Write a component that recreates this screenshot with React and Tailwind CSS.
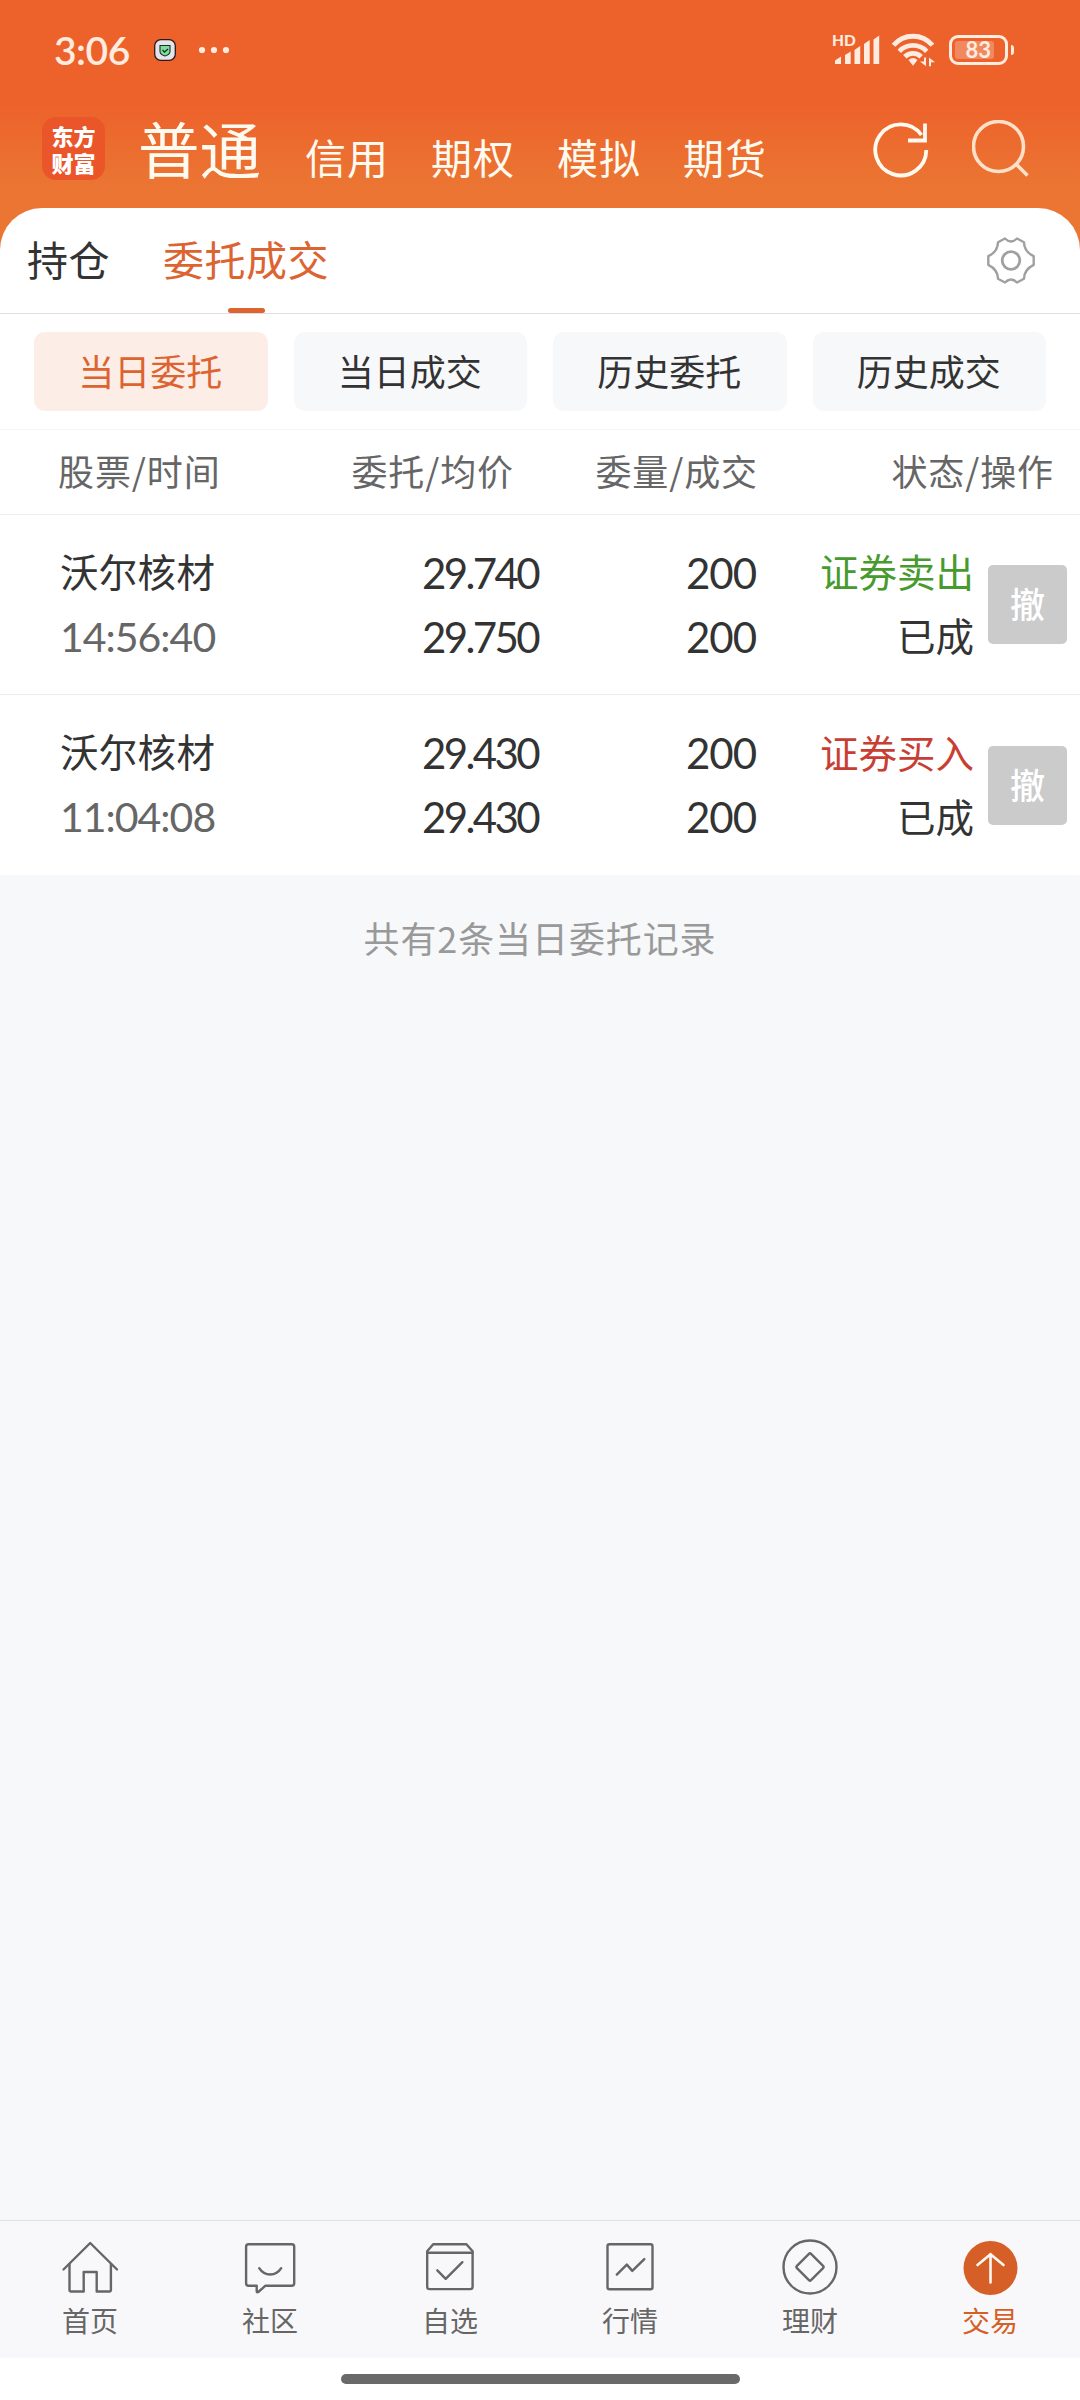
import React from 'react';

const accounts = ['信用', '期权', '模拟', '期货'];

const filters = ['当日委托', '当日成交', '历史委托', '历史成交'];

const orders = [
  {
    name: '沃尔核材',
    time: '14:56:40',
    price: '29.740',
    avg: '29.750',
    amount: '200',
    filled: '200',
    side: '证券卖出',
    sideColor: 'text-[#479a2d]',
    status: '已成',
  },
  {
    name: '沃尔核材',
    time: '11:04:08',
    price: '29.430',
    avg: '29.430',
    amount: '200',
    filled: '200',
    side: '证券买入',
    sideColor: 'text-[#c93e33]',
    status: '已成',
  },
];

const NavIcon = ({ children }) => (
  <svg
    width="60"
    height="60"
    viewBox="0 0 60 60"
    fill="none"
    stroke="#666666"
    strokeWidth="2.4"
    strokeLinecap="round"
    strokeLinejoin="round"
  >
    {children}
  </svg>
);

const tabs = [
  {
    label: '首页',
    icon: (
      <NavIcon>
        <path d="M3.5 32.5 30.2 6 57 32.500" />
        <path d="M9.500 27v26.300q0 1.200 1.200 1.200h13V35h13v19.500h13q1.200 0 1.200-1.200V27" />
      </NavIcon>
    ),
  },
  {
    label: '社区',
    icon: (
      <NavIcon>
        <path d="M8.500 7.300h43.300q2.400 0 2.400 2.400v36.600q0 2.400-2.400 2.400H25.500L18.300 55q-1.600.8-1.600-.8v-5.500H8.500q-2.400 0-2.400-2.400V9.700q0-2.400 2.400-2.400Z" />
        <path d="M19.200 31.200q4 6.300 11 6.300t11-6.300" />
      </NavIcon>
    ),
  },
  {
    label: '自选',
    icon: (
      <NavIcon>
        <path d="M7.200 15.700h45.400v34q0 2.400-2.400 2.400H9.600q-2.400 0-2.400-2.400Z" />
        <path d="M7.200 15.700v-1.500l6-7h33.200l6.200 7v1.500" />
        <path d="m17.300 33.300 8.400 8.500 16.700-16.600" />
      </NavIcon>
    ),
  },
  {
    label: '行情',
    icon: (
      <NavIcon>
        <rect x="7.500" y="7.300" width="45" height="45" rx="2" />
        <path d="m16.800 37.600 10-10 5.500 6.300 12-11.800" />
      </NavIcon>
    ),
  },
  {
    label: '理财',
    icon: (
      <NavIcon>
        <circle cx="30" cy="30" r="26.500" />
        <rect x="20" y="20" width="20" height="20" rx="1.500" transform="rotate(45 30 30)" />
      </NavIcon>
    ),
  },
  {
    label: '交易',
    active: true,
    icon: (
      <svg width="60" height="60" viewBox="0 0 60 60" fill="none" stroke="#fff8f0" strokeWidth="2.6" strokeLinecap="round" strokeLinejoin="round">
        <circle cx="30.500" cy="31" r="27" fill="#d65f28" stroke="none" />
        <path d="M30.500 45.500V17M17.500 28l13-10.800L43.500 28" />
      </svg>
    ),
  },
];

const StatusBar = () => (
  <div className="flex h-[100px] items-center justify-between pl-[54px] pr-[66px] text-[#ffebdf]">
    <div className="flex items-center">
      <span className="w-[100px] font-['Lato'] text-[39px] font-semibold leading-none tracking-[-0.5px]">3:06</span>
      <svg width="22" height="22" viewBox="0 0 22 22">
        <rect x="0.700" y="0.700" width="20.600" height="20.600" rx="6" fill="#e4e4ea" stroke="#2a1a1a" strokeWidth="1.300" />
        <path d="M6 6.500h10v6q0 3-5 4.500-5-1.500-5-4.500Z" fill="#7fdc9c" stroke="#123524" strokeWidth="1.100" />
        <path d="m8.500 11 2 2 3.500-3" fill="none" stroke="#123524" strokeWidth="1.300" />
      </svg>
      <svg className="ml-[22px]" width="32" height="8" viewBox="0 0 32 8" fill="currentColor">
        <circle cx="4" cy="4" r="3.100" />
        <circle cx="16" cy="4" r="3.100" />
        <circle cx="28" cy="4" r="3.100" />
      </svg>
    </div>
    <div className="flex items-center">
      <div className="relative h-[32px] w-[48px]">
        <span className="absolute left-[-1px] top-[-1px] font-['Lato'] text-[15.5px] font-black leading-[15px]">HD</span>
        <svg className="absolute left-0 top-0" width="48" height="32" viewBox="0 0 48 32" fill="currentColor">
          <path d="M2 26.500l6-4V30H2zM12 21l5.700-3.500V30H12zM21.500 16l5.700-4v18h-5.700zM31 10l5.700-4v24H31zM40.500 5.500l5.700-4V30h-5.700z" />
        </svg>
      </div>
      <svg className="ml-[10px]" width="46" height="36" viewBox="0 0 46 36" fill="none" stroke="currentColor" strokeWidth="4.8">
        <path d="M2.500 13.300a25.500 25.500 0 0 1 39 0" />
        <path d="M8.300 19.300a19 19 0 0 1 27.400 0" />
        <path d="M13.800 24.800a11.500 11.500 0 0 1 16.400 0" />
        <path d="M17.500 28q4.500-4 9 0L22 33.800Z" fill="currentColor" stroke="none" />
        <path d="M35 25.500v8.700l-6-4.700h4v-4zM38 34.200v-8.700l6 4.700h-4v4z" fill="currentColor" stroke="none" />
      </svg>
      <div className="ml-[12px] flex h-[30px] w-[59px] items-center rounded-[9px] border-3 border-current pl-[3px]">
        <div className="flex h-[18px] w-[39px] items-center justify-end rounded-[3px] bg-white/25 pr-[3px]">
          <span className="font-['Lato'] text-[22px] font-bold leading-none">83</span>
        </div>
      </div>
      <div className="ml-[3px] h-[10px] w-[3px] rounded-r-sm bg-current"></div>
    </div>
  </div>
);

const TopBar = () => (
  <div className="flex h-[108px] items-start pl-[42px] pr-[50px] pt-[17px] text-[#fffaf0]">
    <div className="flex h-[63px] w-[63px] flex-col items-center justify-center rounded-[14px] bg-[#ea5529] text-[22px] font-black text-white">
      <span className="h-[27px] leading-[26px]">东方</span>
      <span className="h-[27px] leading-[26px]">财富</span>
    </div>
    <span className="ml-[33px] w-[167px] text-[61.5px] leading-[61px]">普通</span>
    <div className="flex gap-[42px] pt-[18px]">
      {accounts.map((item) => (
        <span key={item} className="w-[84px] whitespace-nowrap text-[41px] leading-[42px] tracking-[1px]">{item}</span>
      ))}
    </div>
    <div className="ml-auto flex gap-[42px]">
      <svg className="mt-[3px]" width="58" height="60" viewBox="0 0 58 60" fill="none" stroke="currentColor" strokeWidth="3.8">
        <path d="M54.300 30A25.500 25.500 0 1 1 49.500 15" />
        <path d="M53 3.500V20.500H36" />
      </svg>
      <svg className="mt-[3px] text-[#ffe0c8]" width="58" height="60" viewBox="0 0 58 60" fill="none" stroke="currentColor" strokeWidth="3.6">
        <circle cx="26.500" cy="26.500" r="25" />
        <path d="m43.500 43.500 12 12" />
      </svg>
    </div>
  </div>
);

const SettingsIcon = () => (
  <svg width="52" height="52" viewBox="0 0 52 52" fill="none" stroke="#a0a0a0" strokeWidth="2.4" strokeLinejoin="round">
    <path d="M20 3.500q6 6 12 0l7 3.700q0 9.300 9.700 14v8.600q-9.700 4.700-9.700 14l-7 3.700q-6-6-12 0l-7-3.700q0-9.300-9.700-14v-8.600q9.700-4.700 9.700-14Z" />
    <circle cx="26" cy="25.500" r="8.800" strokeWidth="2.8" />
  </svg>
);

const OrderRow = ({ order }) => (
  <div className="flex h-[180px] items-center pl-[60px] pr-[13px] text-[38.5px] leading-[64px] text-[#333333]">
    <div className="w-[220px]">
      <div className="-mt-[3px] mb-[3px] tracking-[0.3px]">{order.name}</div>
      <div className="font-['Lato'] text-[41px] tracking-[-1px] text-[#666666]">{order.time}</div>
    </div>
    <div className="w-[258px] text-right font-['Lato'] text-[42px] tracking-[-2.6px]">
      <div>{order.price}</div>
      <div>{order.avg}</div>
    </div>
    <div className="w-[218px] text-right font-['Lato'] text-[42px] tracking-[-1px]">
      <div>{order.amount}</div>
      <div>{order.filled}</div>
    </div>
    <div className="-mt-[5px] w-[218px] text-right">
      <div className={order.sideColor}>{order.side}</div>
      <div>{order.status}</div>
    </div>
    <button className="ml-auto h-[79px] w-[79px] rounded-[5px] bg-[#cbcbcb] pb-[4px] text-[35px] font-medium leading-none text-white">撤</button>
  </div>
);

const App = () => {
  return (
    <div className="flex h-[2400px] w-[1080px] flex-col bg-[#f7f8fa] font-['Noto_Sans_CJK_SC',sans-serif]">
      <div className="bg-[linear-gradient(180deg,#ed622b_0px,#ed622b_104px,#eb7432_180px,#eb7532_208px)]">
        <StatusBar />
        <TopBar />
      </div>

      {/* 持仓 / 委托成交 */}
      <div className="bg-[#eb7532]">
        <div className="flex h-[106px] items-stretch justify-between rounded-t-[42px] border-b border-[#dfdfdf] bg-white pl-[27px] pr-[43px] text-[41px] tracking-[0.5px]">
          <div className="flex gap-[53px] leading-[100px]">
            <span className="text-[#333333]">持仓</span>
            <div className="relative text-[#dc6430]">
              委托成交
              <div className="absolute bottom-0 left-[65px] h-[5px] w-[37px] rounded-full bg-[#dc6430]"></div>
            </div>
          </div>
          <div className="flex items-center">
            <SettingsIcon />
          </div>
        </div>
      </div>

      <div className="bg-white">
        <div className="grid h-[116px] grid-cols-4 gap-[26px] border-b border-[#f6f6f6] px-[34px] pt-[18px]">
          {filters.map((item, i) => (
            <button
              key={item}
              className={`h-[79px] rounded-[11px] pb-[4px] pr-[1px] text-[36px] leading-none ${
                i === 0 ? 'bg-[#fcede6] text-[#dc6430]' : 'bg-[#f7f8fa] text-[#333333]'
              }`}
            >
              {item}
            </button>
          ))}
        </div>

        <div className="flex h-[85px] border-b border-[#ececec] text-[36px] leading-[80px] tracking-[0.9px] text-[#666666]">
          <span className="w-[280px] pl-[58px]">股票/时间</span>
          <span className="w-[234px] text-right">委托/均价</span>
          <span className="w-[244px] text-right">委量/成交</span>
          <span className="w-[296px] text-right">状态/操作</span>
        </div>

        <div className="divide-y divide-[#ececec]">
          {orders.map((order) => (
            <OrderRow key={order.time} order={order} />
          ))}
        </div>
      </div>

      <p className="flex-1 pt-[36px] text-center text-[36px] leading-[52px] tracking-[0.9px] text-[#999999]">共有2条当日委托记录</p>

      <div className="grid h-[138px] grid-cols-6 border-t border-[#e0e2e4] bg-[#f8f8fa] pt-[16px]">
        {tabs.map((tab) => (
          <div key={tab.label} className={`flex flex-col items-center text-[28px] leading-[47px] ${tab.active ? 'text-[#d65f28]' : 'text-[#666666]'}`}>
            {tab.icon}
            <span>{tab.label}</span>
          </div>
        ))}
      </div>

      <div className="flex h-[42px] justify-center bg-white pt-[16px]">
        <div className="h-[10px] w-[399px] rounded-full bg-[#696969]"></div>
      </div>
    </div>
  );
};

export default App;
